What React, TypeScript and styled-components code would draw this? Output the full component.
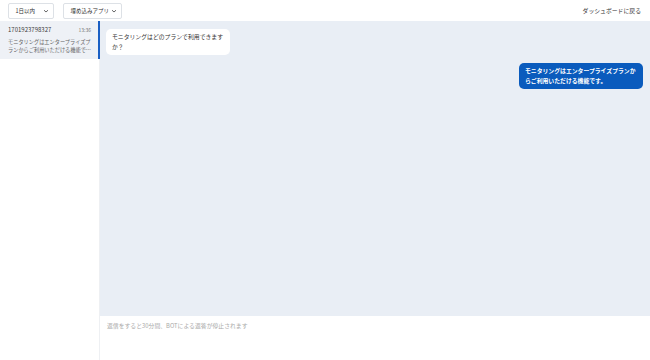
import React from "react";
import styled, { createGlobalStyle } from "styled-components";

const GlobalStyle = createGlobalStyle`
  html, body {
    margin: 0;
    padding: 0;
    background: #ffffff;
    font-family: "Noto Sans CJK JP", "Noto Sans", sans-serif;
  }
  * { box-sizing: border-box; }
`;

interface Message {
  id: number;
  from: "user" | "bot";
  text: string;
}

const messages: Message[] = [
  { id: 1, from: "user", text: "モニタリングはどのプランで利用できますか？" },
  { id: 2, from: "bot", text: "モニタリングはエンタープライズプランからご利用いただける機能です。" },
];

export default function App(): React.ReactElement {
  return (
    <>
      <GlobalStyle />
      <Page>
        <Header>
          <Select $width={46}>
            1日以内 <Chevron />
          </Select>
          <Select $width={59}>
            埋め込みアプリ <Chevron />
          </Select>
          <BackLink>ダッシュボードに戻る</BackLink>
        </Header>
        <Body>
          <Sidebar>
            <Thread $active>
              <ThreadTop>
                <ThreadId>1701923798327</ThreadId>
                <ThreadTime>13:36</ThreadTime>
              </ThreadTop>
              <ThreadPreview>
                モニタリングはエンタープライズプランからご利用いただける機能で…
              </ThreadPreview>
            </Thread>
          </Sidebar>
          <Main>
            <Chat>
              {messages.map((m) => (
                <Bubble key={m.id} $from={m.from}>
                  {m.text}
                </Bubble>
              ))}
            </Chat>
            <Composer>返信をすると30分間、BOTによる返答が停止されます</Composer>
          </Main>
        </Body>
      </Page>
    </>
  );
}

function Chevron(): React.ReactElement {
  return (
    <svg width="6" height="4" viewBox="0 0 6 4" fill="none">
      <path d="M1 1.2l2 1.8 2-1.8" stroke="#555" strokeWidth="0.9" />
    </svg>
  );
}

const Page = styled.div`
  width: 650px;
  height: 360px;
  display: flex;
  flex-direction: column;
  overflow: hidden;
`;

const Header = styled.div`
  height: 21px;
  display: flex;
  align-items: center;
  gap: 9px;
  padding: 0 9px 0 8px;
`;

const Select = styled.div<{ $width: number }>`
  width: ${(p) => p.$width}px;
  height: 16px;
  margin-top: 1px;
  display: flex;
  align-items: center;
  justify-content: space-between;
  padding: 0 4px 0 6.5px;
  border: 1px solid #dde1e6;
  border-radius: 2px;
  font-size: 5.5px;
  color: #333;
  white-space: nowrap;
`;

const BackLink = styled.div`
  margin-left: auto;
  font-size: 5.85px;
  color: #333;
`;

const Body = styled.div`
  flex: 1;
  display: flex;
  min-height: 0;
`;

const Sidebar = styled.div`
  width: 100px;
  border-right: 1px solid #eef0f3;
`;

const Thread = styled.div<{ $active?: boolean }>`
  height: 38px;
  padding: 4px 7px 0 8px;
  background: ${(p) => (p.$active ? "#eef1f6" : "#fff")};
  border-right: 2px solid ${(p) => (p.$active ? "#1a5fc4" : "transparent")};
  margin-right: -1px;
`;

const ThreadTop = styled.div`
  display: flex;
  justify-content: space-between;
  align-items: baseline;
  line-height: 10px;
`;

const ThreadId = styled.span`
  font-size: 6px;
  color: #3a3a3a;
`;

const ThreadTime = styled.span`
  font-size: 5px;
  color: #777;
`;

const ThreadPreview = styled.div`
  margin-top: 3px;
  font-size: 5.2px;
  line-height: 7.5px;
  color: #666;
`;

const Main = styled.div`
  flex: 1;
  display: flex;
  flex-direction: column;
`;

const Chat = styled.div`
  flex: 1;
  background: #e9eef5;
  padding: 8px 7px 0 6px;
  display: flex;
  flex-direction: column;
  gap: 8px;
`;

const Bubble = styled.div<{ $from: "user" | "bot" }>`
  width: 124px;
  padding: 3px 5px 3px 6px;
  border-radius: 5px;
  font-size: 5.85px;
  line-height: 10px;
  align-self: ${(p) => (p.$from === "bot" ? "flex-end" : "flex-start")};
  background: ${(p) => (p.$from === "bot" ? "#0a5bbd" : "#fff")};
  color: ${(p) => (p.$from === "bot" ? "#fff" : "#333")};
  font-weight: ${(p) => (p.$from === "bot" ? 700 : 400)};
`;

const Composer = styled.div`
  height: 44px;
  padding: 5px 7px;
  font-size: 5.85px;
  color: #aaa;
`;
